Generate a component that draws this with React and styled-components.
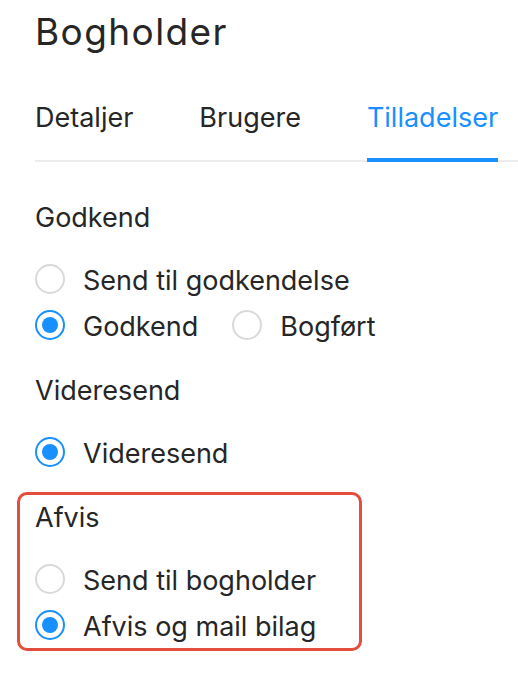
import React, { useState } from 'react'
import styled, { createGlobalStyle } from 'styled-components'

const GlobalStyle = createGlobalStyle`
  body {
    margin: 0;
    background: #fff;
    font-family: Inter, Lato, sans-serif;
    color: #262626;
  }
`;

const TABS = ['Detaljer', 'Brugere', 'Tilladelser'];

const Radio = ({ checked, label, onClick }) => (
  <Option onClick={onClick}>
    <Circle $checked={checked}>{checked && <Dot />}</Circle>
    <OptionText>{label}</OptionText>
  </Option>
)

const App = () => {
  const [tab, setTab] = useState('Tilladelser');
  const [approve, setApprove] = useState('godkend');
  const [forward, setForward] = useState(true);
  const [reject, setReject] = useState('mail');

  return (
    <Page>
      <GlobalStyle />
      <Title>Bogholder</Title>
      <TabBar>
        {TABS.map(t => (
          <Tab key={t} $active={t === tab} onClick={() => setTab(t)}>{t}</Tab>
        ))}
      </TabBar>

      <SectionLabel $top={38}>Godkend</SectionLabel>
      <Options>
        <Row>
          <Radio label="Send til godkendelse" checked={approve === 'send'} onClick={() => setApprove('send')} />
        </Row>
        <Row>
          <Radio label="Godkend" checked={approve === 'godkend'} onClick={() => setApprove('godkend')} />
          <Radio label="Bogført" checked={approve === 'bogfort'} onClick={() => setApprove('bogfort')} />
        </Row>
      </Options>

      <SectionLabel $top={25}>Videresend</SectionLabel>
      <Options>
        <Row>
          <Radio label="Videresend" checked={forward} onClick={() => setForward(!forward)} />
        </Row>
      </Options>

      <Highlight>
        <SectionLabel $top={0}>Afvis</SectionLabel>
        <Options>
          <Row>
            <Radio label="Send til bogholder" checked={reject === 'send'} onClick={() => setReject('send')} />
          </Row>
          <Row>
            <Radio label="Afvis og mail bilag" checked={reject === 'mail'} onClick={() => setReject('mail')} />
          </Row>
        </Options>
      </Highlight>
    </Page>
  )
}

export default App

const Page = styled.div`
  padding: 10px 0 30px 35px;
  display: flex;
  flex-direction: column;
  align-items: flex-start;
`;

const Title = styled.h1`
  margin: 0;
  font-size: 37px;
  line-height: 44px;
  letter-spacing: 1.4px;
  font-weight: 400;
  color: #262626;
`;

const TabBar = styled.div`
  align-self: stretch;
  margin-top: 46px;
  display: flex;
  gap: 66px;
  border-bottom: 2px solid #ececec;
`;

const Tab = styled.div`
  font-size: 27px;
  line-height: 30px;
  padding: 3px 0 25px;
  margin-bottom: -2px;
  border-bottom: 4px solid ${p => p.$active ? '#1890ff' : 'transparent'};
  color: ${p => p.$active ? '#1890ff' : '#262626'};
  cursor: pointer;
`;

const SectionLabel = styled.div`
  margin-top: ${p => p.$top}px;
  padding-top: 3px;
  font-size: 27px;
  line-height: 30px;
`;

const Options = styled.div`
  margin-top: 23px;
  display: flex;
  flex-direction: column;
`;

const Row = styled.div`
  height: 46px;
  display: flex;
  align-items: center;
  gap: 34px;
`;

const Option = styled.label`
  display: flex;
  align-items: center;
  gap: 18px;
  cursor: pointer;
`;

const Circle = styled.span`
  width: 30px;
  height: 30px;
  box-sizing: border-box;
  border-radius: 50%;
  border: 2px solid ${p => p.$checked ? '#1890ff' : '#d9d9d9'};
  display: flex;
  align-items: center;
  justify-content: center;
`;

const Dot = styled.span`
  width: 16px;
  height: 16px;
  border-radius: 50%;
  background: #1890ff;
`;

const OptionText = styled.span`
  padding-top: 3px;
  font-size: 27px;
  line-height: 30px;
`;

const Highlight = styled.div`
  margin: 17px 0 0 -18px;
  width: 345px;
  box-sizing: border-box;
  padding: 5px 0 0 15px;
  border: 3px solid #e34d3b;
  border-radius: 10px;
`;
